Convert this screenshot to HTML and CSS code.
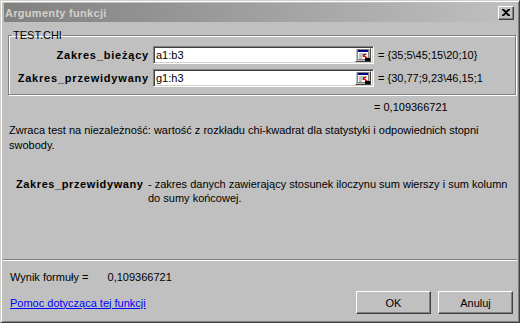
FILE: index.html
```html
<!DOCTYPE html>
<html lang="pl">
<head>
  <meta charset="UTF-8">
  <title>Argumenty funkcji</title>
  <link rel="stylesheet" href="styles.css">
</head>
<body>
  <div class="window">
    <div class="titlebar">
      <span class="title">Argumenty funkcji</span>
      <span class="close-btn">
        <svg width="8" height="7" viewBox="0 0 8 7">
          <path d="M0 0h2l2 2 2-2h2v1L5 3.5 8 6v1H6L4 5 2 7H0V6l3-2.5L0 1z" fill="#000"/>
        </svg>
      </span>
    </div>

    <div class="content">
      <fieldset class="group">
        <legend>TEST.CHI</legend>

        <div class="arg-row">
          <label class="arg-name">Zakres_bieżący</label>
          <div class="refedit">
            <span class="ref-text">a1:b3</span>
            <span class="ref-btn">
              <svg width="13" height="12" viewBox="0 0 13 12">
                <rect x="0.5" y="0.5" width="11" height="10" fill="#fff" stroke="#808080"/>
                <rect x="1" y="1" width="10" height="2" fill="#000080"/>
                <path d="M2 5h8M2 7h4M2 9h3" stroke="#808080"/>
                <path d="M6 5l5 4-1 1-4-3z" fill="#e00000"/>
                <path d="M6 5h3v1H7v2H6z" fill="#e00000"/>
                <rect x="8" y="9" width="5" height="3" fill="#000"/>
              </svg>
            </span>
          </div>
          <span class="arg-value">= {35;5\45;15\20;10}</span>
        </div>

        <div class="arg-row">
          <label class="arg-name">Zakres_przewidywany</label>
          <div class="refedit">
            <span class="ref-text">g1:h3</span>
            <span class="ref-btn">
              <svg width="13" height="12" viewBox="0 0 13 12">
                <rect x="0.5" y="0.5" width="11" height="10" fill="#fff" stroke="#808080"/>
                <rect x="1" y="1" width="10" height="2" fill="#000080"/>
                <path d="M2 5h8M2 7h4M2 9h3" stroke="#808080"/>
                <path d="M6 5l5 4-1 1-4-3z" fill="#e00000"/>
                <path d="M6 5h3v1H7v2H6z" fill="#e00000"/>
                <rect x="8" y="9" width="5" height="3" fill="#000"/>
              </svg>
            </span>
          </div>
          <span class="arg-value">= {30,77;9,23\46,15;1</span>
        </div>
      </fieldset>

      <div class="result">= 0,109366721</div>

      <p class="desc">Zwraca test na niezależność: wartość z rozkładu chi-kwadrat dla statystyki i odpowiednich stopni swobody.</p>

      <div class="arg-help">
        <span class="help-name">Zakres_przewidywany</span>
        <span class="help-text">- zakres danych zawierający stosunek iloczynu sum wierszy i sum kolumn do sumy końcowej.</span>
      </div>
    </div>

    <div class="separator"></div>

    <div class="footer">
      <div class="formula">Wynik formuły = <span class="formula-value">0,109366721</span></div>
      <div class="bottom-row">
        <a href="#" class="help-link">Pomoc dotycząca tej funkcji</a>
        <div class="buttons">
          <button class="btn">OK</button>
          <button class="btn">Anuluj</button>
        </div>
      </div>
    </div>
  </div>
</body>
</html>
```

FILE: styles.css
```css
html, body {
  margin: 0;
  padding: 0;
}
body {
  font-family: 'Liberation Sans', Arial, sans-serif;
  font-size: 11px;
  color: #000;
  background: #c0c0c0;
}
.window {
  width: 520px;
  height: 323px;
  box-sizing: border-box;
  background: #c0c0c0;
  border-top: 1px solid #d4d0c8;
  border-left: 1px solid #d4d0c8;
  border-right: 1px solid #404040;
  border-bottom: 1px solid #404040;
  box-shadow: inset 1px 1px 0 #fff, inset -1px -1px 0 #808080;
  padding: 2px 3px 0 3px;
  display: flex;
  flex-direction: column;
}
.titlebar {
  height: 19px;
  display: flex;
  align-items: center;
  justify-content: space-between;
  background: linear-gradient(to right, #808080, #c0c0c0);
  padding: 0 2px 0 1px;
}
.title {
  color: #d4d0c8;
  font-weight: bold;
  font-size: 11px;
  letter-spacing: 0.3px;
}
.close-btn {
  width: 16px;
  height: 14px;
  box-sizing: border-box;
  background: #c0c0c0;
  border-top: 1px solid #fff;
  border-left: 1px solid #fff;
  border-right: 1px solid #404040;
  border-bottom: 1px solid #404040;
  box-shadow: inset -1px -1px 0 #808080;
  display: flex;
  align-items: center;
  justify-content: center;
  padding: 0 1px 1px 0;
}
.content {
  padding: 0 0 0 4px;
  flex: 1;
}
.group {
  margin: 7px 0 0 0;
  padding: 5px 0 7px 0;
  border: 1px solid #808080;
  box-shadow: inset 1px 1px 0 #fff, 1px 1px 0 #fff;
  min-width: 0;
}
.group legend {
  padding: 0 1px;
  margin-left: 3px;
}
.arg-row {
  display: grid;
  grid-template-columns: 140px 221px 110px;
  column-gap: 4px;
  align-items: center;
  margin-bottom: 5px;
}
.arg-row:last-child {
  margin-bottom: 0;
}
.arg-name {
  font-weight: bold;
  text-align: right;
  letter-spacing: 0.8px;
}
.refedit {
  height: 18px;
  box-sizing: border-box;
  background: #fff;
  border-top: 1px solid #808080;
  border-left: 1px solid #808080;
  border-right: 1px solid #fff;
  border-bottom: 1px solid #fff;
  box-shadow: inset 1px 1px 0 #404040, inset -1px -1px 0 #d4d0c8;
  display: flex;
  align-items: center;
  justify-content: space-between;
  padding: 2px;
}
.ref-btn {
  width: 16px;
  height: 14px;
  box-sizing: border-box;
  background: #c0c0c0;
  border-top: 1px solid #fff;
  border-left: 1px solid #fff;
  border-right: 1px solid #404040;
  border-bottom: 1px solid #404040;
  display: flex;
  align-items: center;
  justify-content: center;
}
.arg-value {
  white-space: nowrap;
}
.result {
  margin: 6px 0 0 366px;
}
.desc {
  margin: 10px 0 0 1px;
  line-height: 15px;
  padding-right: 30px;
}
.arg-help {
  display: flex;
  margin: 24px 0 0 8px;
  line-height: 14px;
}
.help-name {
  font-weight: bold;
  letter-spacing: 0.6px;
  width: 132px;
  flex-shrink: 0;
}
.help-text {
  padding-right: 8px;
}
.separator {
  height: 1px;
  border-top: 1px solid #808080;
  background: #fff;
  margin: 0 -1px;
}
.footer {
  height: 61px;
  box-sizing: border-box;
  padding: 10px 3px 0 6px;
}
.formula-value {
  margin-left: 16px;
}
.bottom-row {
  display: flex;
  justify-content: space-between;
  align-items: center;
  margin-top: 8px;
}
.help-link {
  color: #0000ff;
}
.buttons {
  display: flex;
  gap: 7px;
}
.btn {
  width: 75px;
  height: 23px;
  font-family: inherit;
  font-size: 11px;
  color: #000;
  background: #c0c0c0;
  border-top: 1px solid #fff;
  border-left: 1px solid #fff;
  border-right: 1px solid #404040;
  border-bottom: 1px solid #404040;
  box-shadow: inset -1px -1px 0 #808080;
  padding: 0;
}
```
